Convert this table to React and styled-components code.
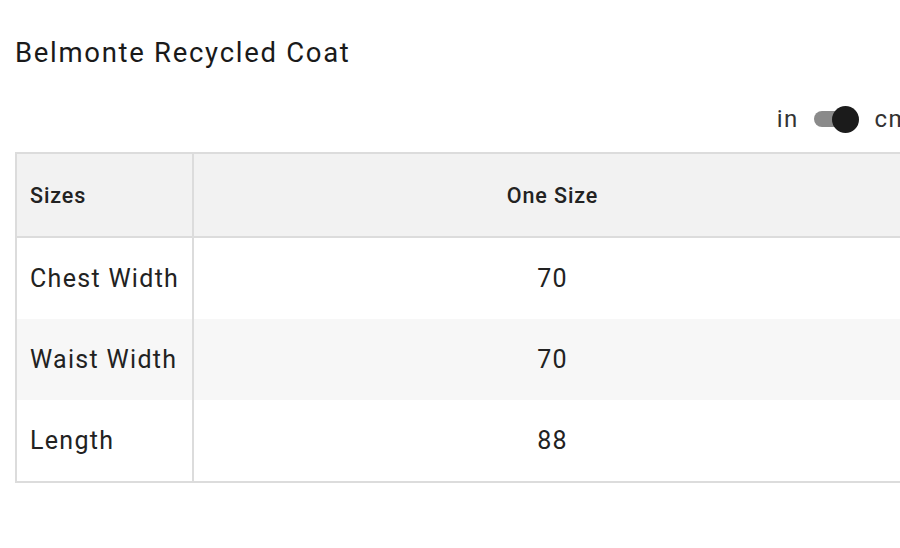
import React from "react";
import styled, { createGlobalStyle } from "styled-components";

const Global = createGlobalStyle`
  html, body { margin: 0; padding: 0; background: #fff; overflow: hidden; }
  body { font-family: Roboto, "Noto Sans", sans-serif; color: #222; }
`;

const Page = styled.div`
  width: 898px;
  padding: 35px 0 0 15px;
`;

const Title = styled.h1`
  margin: 0;
  font-size: 27.5px;
  font-weight: 400;
  letter-spacing: 1.7px;
  line-height: 36px;
  color: #1a1a1a;
`;

const UnitBar = styled.div`
  display: flex;
  justify-content: flex-end;
  align-items: center;
  gap: 15px;
  height: 40px;
  margin-top: 28px;
  margin-bottom: 13px;
  padding-right: 2px;
`;

const UnitLabel = styled.span`
  font-size: 24px;
  letter-spacing: 1.4px;
  color: #333;
`;

const Track = styled.span`
  position: relative;
  display: inline-block;
  width: 43px;
  height: 16px;
  margin-right: 3px;
  border-radius: 8px;
  background: #8a8a8a;
`;

const Knob = styled.span`
  position: absolute;
  top: 50%;
  left: ${(p) => (p.$on ? "18px" : "-4px")};
  width: 27px;
  height: 27px;
  margin-top: -13.5px;
  border-radius: 50%;
  background: #1b1b1b;
`;

const Table = styled.table`
  width: 100%;
  border-collapse: collapse;
  border: 2px solid #dcdcdc;
  table-layout: fixed;
`;

const Th = styled.th`
  height: 82px;
  padding: ${(p) => (p.$first ? "0 0 0 13px" : "0 14px")};
  background: #f2f2f2;
  font-size: 21.5px;
  font-weight: 500;
  letter-spacing: 0.9px;
  white-space: nowrap;
  color: #222;
  text-align: ${(p) => (p.$first ? "left" : "center")};
  border-right: ${(p) => (p.$first ? "2px solid #dcdcdc" : "none")};
  border-bottom: 2px solid #dcdcdc;
  width: ${(p) => (p.$first ? "162px" : "auto")};
`;

const Row = styled.tr`
  background: ${(p) => (p.$striped ? "#f7f7f7" : "#fff")};
`;

const Td = styled.td`
  height: 81px;
  padding: ${(p) => (p.$first ? "0 0 0 13px" : "0 14px")};
  font-size: 25px;
  letter-spacing: 1.3px;
  white-space: nowrap;
  color: #222;
  text-align: ${(p) => (p.$first ? "left" : "center")};
  border-right: ${(p) => (p.$first ? "2px solid #dcdcdc" : "none")};
`;

const rows = [
  ["Chest Width", "70"],
  ["Waist Width", "70"],
  ["Length", "88"],
];

export default function App() {
  return (
    <Page>
      <Global />
      <Title>Belmonte Recycled Coat</Title>
      <UnitBar>
        <UnitLabel>in</UnitLabel>
        <Track>
          <Knob $on />
        </Track>
        <UnitLabel>cm</UnitLabel>
      </UnitBar>
      <Table>
        <thead>
          <tr>
            <Th $first>Sizes</Th>
            <Th>One Size</Th>
          </tr>
        </thead>
        <tbody>
          {rows.map(([k, v], i) => (
            <Row key={k} $striped={i % 2 === 1}>
              <Td $first>{k}</Td>
              <Td>{v}</Td>
            </Row>
          ))}
        </tbody>
      </Table>
    </Page>
  );
}
